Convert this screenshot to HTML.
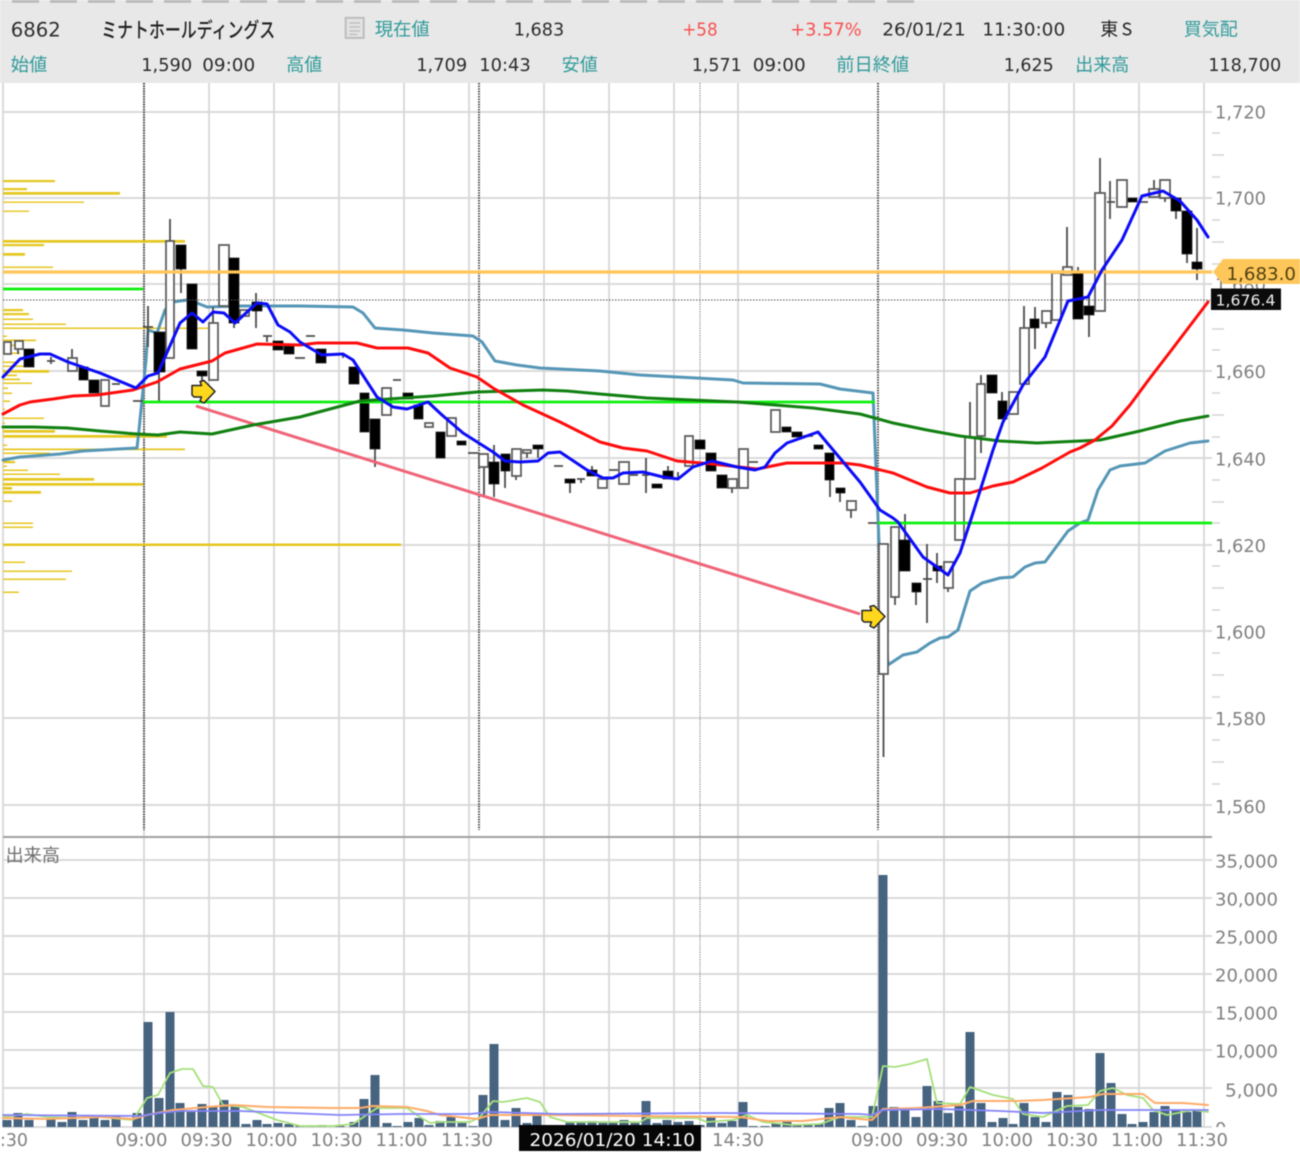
<!DOCTYPE html>
<html lang="ja">
<head>
<meta charset="utf-8">
<title>6862 ミナトホールディングス</title>
<style>
html,body{margin:0;padding:0;background:#fff;width:1300px;height:1158px;overflow:hidden}
svg{display:block;filter:blur(0.5px)}
text{font-family:"DejaVu Sans","Noto Sans CJK JP",sans-serif;font-size:18px;fill:#2c2c2c}
.j{font-family:"Noto Sans CJK JP","DejaVu Sans",sans-serif;fill:#2f9a9a}
.r{fill:#f85050}
.a{fill:#808080}
.l{fill:none;stroke-linejoin:round;stroke-linecap:round}
</style>
</head>
<body>
<svg width="1300" height="1158" viewBox="0 0 1300 1158" xmlns="http://www.w3.org/2000/svg">
<defs><clipPath id="z"><rect x="1210" y="1100" width="30" height="27"/></clipPath></defs>
<rect width="1300" height="1158" fill="#fff"/>
<!-- header -->
<rect width="1300" height="83" fill="#e8e8e8"/>
<path d="M12 1H39M50 1H77M88 1H115M126 1H153M164 1H191M202 1H229M240 1H267M278 1H305M316 1H343M354 1H381M392 1H419M430 1H457M468 1H495M506 1H533M544 1H571M582 1H609M620 1H647M658 1H685M696 1H723M734 1H761M772 1H799M810 1H837M848 1H875M887 1H914" stroke="#b8b8b8" stroke-width="3.4"/>
<g transform="translate(-0.8,-0.6)">
<text x="11.5" y="37" style="font-size:19.5px" textLength="50" lengthAdjust="spacingAndGlyphs">6862</text>
<text class="j" x="102" y="38" style="font-size:21px;fill:#222;font-weight:500" textLength="174" lengthAdjust="spacingAndGlyphs">ミナトホールディングス</text>
<g fill="none" stroke="#bdbdbd">
<rect x="346.500" y="18.500" width="18" height="20" stroke-width="2" fill="#e4e4e4"/>
<path d="M350 23.500H361M350 27.500H361M350 31.500H361M350 35H358" stroke-width="1.400"/>
</g>
<text class="j" x="375.500" y="36" textLength="55" lengthAdjust="spacingAndGlyphs">現在値</text>
<text x="514.500" y="36" textLength="50.500" lengthAdjust="spacingAndGlyphs">1,683</text>
<text class="r" x="683" y="36" textLength="35.500" lengthAdjust="spacingAndGlyphs">+58</text>
<text class="r" x="791" y="36" textLength="71.500" lengthAdjust="spacingAndGlyphs">+3.57%</text>
<text x="883" y="36" textLength="83.500" lengthAdjust="spacingAndGlyphs">26/01/21</text>
<text x="983" y="36" textLength="83" lengthAdjust="spacingAndGlyphs">11:30:00</text>
<text class="j" x="1101" y="36" style="fill:#222" textLength="32" lengthAdjust="spacing">東S</text>
<text class="j" x="1184.500" y="36" textLength="54" lengthAdjust="spacingAndGlyphs">買気配</text>
</g>
<g transform="translate(-0.8,0)">
<text class="j" x="11.500" y="71" textLength="36.500" lengthAdjust="spacingAndGlyphs">始値</text>
<text x="142" y="71" textLength="51" lengthAdjust="spacingAndGlyphs">1,590</text>
<text x="203" y="71" textLength="53" lengthAdjust="spacingAndGlyphs">09:00</text>
<text class="j" x="287" y="71" textLength="36" lengthAdjust="spacingAndGlyphs">高値</text>
<text x="417" y="71" textLength="51" lengthAdjust="spacingAndGlyphs">1,709</text>
<text x="480" y="71" textLength="51.500" lengthAdjust="spacingAndGlyphs">10:43</text>
<text class="j" x="562.500" y="71" textLength="36" lengthAdjust="spacingAndGlyphs">安値</text>
<text x="692.500" y="71" textLength="50" lengthAdjust="spacingAndGlyphs">1,571</text>
<text x="753.500" y="71" textLength="53" lengthAdjust="spacingAndGlyphs">09:00</text>
<text class="j" x="837" y="71" textLength="73" lengthAdjust="spacingAndGlyphs">前日終値</text>
<text x="1004.500" y="71" textLength="50" lengthAdjust="spacingAndGlyphs">1,625</text>
<text class="j" x="1076" y="71" textLength="54" lengthAdjust="spacingAndGlyphs">出来高</text>
<text x="1209" y="71" textLength="73" lengthAdjust="spacingAndGlyphs">118,700</text>
</g>

<!-- grid -->
<path d="M3 83V1127M144 83V1127M209 83V1127M274 83V1127M339 83V1127M404 83V1127M469 83V1127M544 83V1127M609 83V1127M674 83V1127M738 83V1127M878 840V1127M944 83V1127M1009 83V1127M1074 83V1127M1139 83V1127M1204 83V1127" stroke="#d6d6d6" stroke-width="1.700" fill="none"/>
<path d="M3 112H1212M3 198H1212M3 284H1212M3 371H1212M3 458H1212M3 545H1212M3 631H1212M3 718H1212M3 805H1212M3 860H1212M3 898H1212M3 936H1212M3 974H1212M3 1012H1212M3 1050H1212M3 1088H1212M3 1127H1212" stroke="#d6d6d6" stroke-width="1.700" fill="none"/>
<path d="M1212 155H1224M1212 177H1220M1212 133H1220M1212 220H1220M1212 242H1224M1212 264H1220M1212 329H1224M1212 350H1220M1212 393H1220M1212 415H1224M1212 437H1220M1212 480H1220M1212 502H1224M1212 523H1220M1212 566H1220M1212 588H1224M1212 610H1220M1212 653H1220M1212 675H1224M1212 697H1220M1212 740H1220M1212 762H1224M1212 784H1220" stroke="#d4d4d4" stroke-width="1.500"/>
<path d="M3 837H1212" stroke="#a0a0a0" stroke-width="2"/>
<path d="M144 83V830M479 83V830M878 83V830" stroke="#444" stroke-width="2" stroke-dasharray="1.400 1.200" fill="none"/>
<path d="M700 83V1127" stroke="#777" stroke-width="1" stroke-dasharray="1.200 1.200" fill="none"/>

<!-- axis labels -->
<g>
<text class="a" x="1215" y="118.500" textLength="51" lengthAdjust="spacingAndGlyphs">1,720</text>
<text class="a" x="1215" y="204.500" textLength="51" lengthAdjust="spacingAndGlyphs">1,700</text>
<text class="a" x="1215" y="291" textLength="51" lengthAdjust="spacingAndGlyphs">1,680</text>
<text class="a" x="1215" y="378" textLength="51" lengthAdjust="spacingAndGlyphs">1,660</text>
<text class="a" x="1215" y="465.500" textLength="51" lengthAdjust="spacingAndGlyphs">1,640</text>
<text class="a" x="1215" y="552" textLength="51" lengthAdjust="spacingAndGlyphs">1,620</text>
<text class="a" x="1215" y="638.500" textLength="51" lengthAdjust="spacingAndGlyphs">1,600</text>
<text class="a" x="1215" y="725" textLength="51" lengthAdjust="spacingAndGlyphs">1,580</text>
<text class="a" x="1215" y="813" textLength="51" lengthAdjust="spacingAndGlyphs">1,560</text>
<text class="a" x="1215" y="867.500" textLength="63" lengthAdjust="spacingAndGlyphs">35,000</text>
<text class="a" x="1215" y="905.500" textLength="63" lengthAdjust="spacingAndGlyphs">30,000</text>
<text class="a" x="1215" y="943.500" textLength="63" lengthAdjust="spacingAndGlyphs">25,000</text>
<text class="a" x="1215" y="981.500" textLength="63" lengthAdjust="spacingAndGlyphs">20,000</text>
<text class="a" x="1215" y="1019.500" textLength="63" lengthAdjust="spacingAndGlyphs">15,000</text>
<text class="a" x="1215" y="1057.500" textLength="63" lengthAdjust="spacingAndGlyphs">10,000</text>
<text class="a" x="1225" y="1096.500" textLength="53" lengthAdjust="spacingAndGlyphs">5,000</text>
<text class="a" x="1215" y="1135" clip-path="url(#z)">0</text>
<text class="a" x="0" y="1146" textLength="28" lengthAdjust="spacingAndGlyphs">:30</text>
<text class="a" x="115.500" y="1146" textLength="52" lengthAdjust="spacingAndGlyphs">09:00</text>
<text class="a" x="180.500" y="1146" textLength="52" lengthAdjust="spacingAndGlyphs">09:30</text>
<text class="a" x="245.500" y="1146" textLength="52" lengthAdjust="spacingAndGlyphs">10:00</text>
<text class="a" x="310.500" y="1146" textLength="52" lengthAdjust="spacingAndGlyphs">10:30</text>
<text class="a" x="375.500" y="1146" textLength="52" lengthAdjust="spacingAndGlyphs">11:00</text>
<text class="a" x="441" y="1146" textLength="52" lengthAdjust="spacingAndGlyphs">11:30</text>
<text class="a" x="712" y="1146" textLength="52" lengthAdjust="spacingAndGlyphs">14:30</text>
<text class="a" x="851" y="1146" textLength="52" lengthAdjust="spacingAndGlyphs">09:00</text>
<text class="a" x="916" y="1146" textLength="52" lengthAdjust="spacingAndGlyphs">09:30</text>
<text class="a" x="981" y="1146" textLength="52" lengthAdjust="spacingAndGlyphs">10:00</text>
<text class="a" x="1046" y="1146" textLength="52" lengthAdjust="spacingAndGlyphs">10:30</text>
<text class="a" x="1111" y="1146" textLength="52" lengthAdjust="spacingAndGlyphs">11:00</text>
<text class="a" x="1176" y="1146" textLength="52" lengthAdjust="spacingAndGlyphs">11:30</text>
</g>
<text class="j" x="5.500" y="861.500" style="fill:#6e6e6e" textLength="54.500" lengthAdjust="spacingAndGlyphs">出来高</text>

<!-- volume profile -->
<g fill="#e6c61e">
<rect x="3" y="180" width="52" height="2.200"/><rect x="3" y="188" width="24" height="2.200"/><rect x="3" y="192" width="117" height="2.700"/><rect x="3" y="201.500" width="81" height="1.400"/><rect x="3" y="210.500" width="26" height="1.400"/>
<rect x="3" y="240" width="182" height="2.700"/><rect x="3" y="244" width="41" height="2.200"/><rect x="3" y="253" width="22" height="2.700"/><rect x="3" y="266.500" width="50" height="1.500"/><rect x="3" y="309" width="20" height="2.200"/><rect x="3" y="313" width="26" height="2.200"/><rect x="3" y="318.500" width="30" height="1.500"/><rect x="3" y="323.500" width="63" height="1.500"/><rect x="3" y="327.500" width="205" height="1.500"/><rect x="3" y="335.500" width="4" height="1.500"/><rect x="3" y="339.500" width="33" height="1.700"/><rect x="3" y="344.500" width="17" height="1.500"/><rect x="3" y="352.500" width="17" height="1.500"/><rect x="3" y="361.500" width="16" height="1.500"/><rect x="3" y="365.500" width="21" height="1.500"/><rect x="3" y="370" width="46" height="2.700"/><rect x="3" y="374.500" width="14" height="1.700"/><rect x="3" y="378.500" width="17" height="1.700"/><rect x="3" y="382.500" width="29" height="1.500"/><rect x="3" y="387.500" width="5" height="1.500"/><rect x="3" y="392.500" width="9" height="1.500"/><rect x="3" y="400.500" width="7" height="1.500"/><rect x="3" y="408.500" width="2" height="1.500"/><rect x="3" y="417.500" width="41" height="1.500"/><rect x="3" y="422.500" width="2" height="1.500"/><rect x="3" y="430" width="52" height="2.700"/><rect x="3" y="435" width="164" height="2.700"/>
<rect x="3" y="444.500" width="4" height="1.500"/><rect x="3" y="448.500" width="182" height="1.700"/><rect x="3" y="452.500" width="47" height="1.500"/><rect x="3" y="461" width="12" height="2.200"/><rect x="3" y="465.500" width="4" height="1.500"/><rect x="3" y="469.500" width="25" height="1.500"/><rect x="3" y="473.500" width="57" height="1.500"/><rect x="3" y="478" width="91" height="2.700"/><rect x="3" y="483" width="140" height="2.700"/><rect x="3" y="487" width="9" height="2.700"/><rect x="3" y="491" width="38" height="2.700"/><rect x="3" y="500.500" width="9" height="1.500"/><rect x="3" y="522.500" width="30" height="1.500"/><rect x="3" y="526.500" width="30" height="1.500"/><rect x="3" y="543.500" width="398" height="2.500"/><rect x="3" y="561.500" width="22" height="1.500"/><rect x="3" y="570.500" width="69" height="1.500"/><rect x="3" y="578.500" width="63" height="1.500"/><rect x="3" y="591.500" width="16" height="1.500"/>
</g>

<!-- blue-grey band -->
<polyline class="l" stroke="#5596b6" stroke-width="3" points="3,460 20,457 60,454 83,451 137,448 139,430 146,360 148,330 157,333 165,310 173,302 187,300 197,303 207,307 240,306 300,306 353,307 363,313 375,328 403,330 433,333 473,336 482,342 495,361 517,365 540,368 600,371 640,375 733,380 743,383 820,384 840,389 873,393 879,543 888,665 903,655 917,652 930,643 940,638 948,637 958,630 970,591 982,583 1000,578 1013,577 1025,567 1035,563 1045,562 1068,531 1080,523 1088,520 1098,490 1110,470 1120,466 1145,463 1165,451 1190,443 1208,441"/>

<!-- candles -->
<path stroke="#4c4c4c" stroke-width="1.800" fill="none" d="M18 349V354M51 357V364M72 349V358M148 306V347M159 372V401M170 219V241M181 269V293M202 376V382M213 307V323M234 323V328M256 293V328M267 336V342M343 355V358M375 449V467M484 467V495M494 445V497M505 471V488M516 476V480M527 453V458M538 449V458M570 483V493M581 479V483M592 466V470M646 458V493M668 466V471M678 472V479M732 488V493M830 480V497M840 493V502M851 510V518M883.500 674V757M895 597V605M905 514V540M916 592V605M927 544V623M937 553V583M948 588V592M970 402V437M981 375V384M981 436V453M1002 392V401M1024 306V328M1035 307V349M1046 323V328M1067 227V267M1078 267V273M1089 297V337M1100 158V193M1110 181V219M1154 180V189M1165 198V202M1176 211V219M1187 254V263M1197 228V280M47 361H55M112 384H120M133 401H143M143 327H153M263 336H272M295 358H305M306 336H315M393 380H401M468 453H478M554 466H563M577 479H585M609 470H618M630 475H638M642 475H649M749 462H758M803 436H813M868 523H877M923 579H932M1107 202H1115M1138 202H1148"/>
<path fill="#fff" stroke="#585858" stroke-width="1.700" d="M4 342H11V354H4ZM15 341H23V349H15ZM68 358H77V371H68ZM101 380H109V406H101ZM166 241H174V358H166ZM209 323H218V380H209ZM219 245H229V306H219ZM240 310H249V316H240ZM382 388H391V415H382ZM425 423H433V427H425ZM447 418H456V436H447ZM479 454H488V467H479ZM512 449H521V476H512ZM523 450H531V453H523ZM598 479H607V488H598ZM619 462H629V484H619ZM685 436H693V466H685ZM728 479H737V488H728ZM739 449H748V488H739ZM771 410H780V432H771ZM847 501H856V510H847ZM879 544H888V674H879ZM891 527H899V597H891ZM944 562H953V588H944ZM955 479H964V540H955ZM965 437H975V479H965ZM977 384H985V436H977ZM1009 392H1018V414H1009ZM1020 328H1029V384H1020ZM1042 311H1051V323H1042ZM1052 273H1061V320H1052ZM1063 267H1072V275H1063ZM1095 193H1105V311H1095ZM1117 180H1127V207H1117ZM1149 189H1159V197H1149ZM1160 180H1170V198H1160Z"/>
<path fill="#000" stroke="#222" stroke-width=".8" d="M24 349H34V367H24ZM79 367H88V380H79ZM89 380H99V393H89ZM154 332H165V372H154ZM176 245H186V269H176ZM187 284H197V349H187ZM197 371H207V376H197ZM229 258H239V323H229ZM252 302H262V311H252ZM273 341H283V350H273ZM284 346H294V354H284ZM316 349H326V363H316ZM349 367H359V384H349ZM360 393H369V432H360ZM370 419H380V449H370ZM403 393H413V399H403ZM414 405H423V419H414ZM436 432H445V458H436ZM457 441H466V445H457ZM489 462H499V484H489ZM501 454H510V471H501ZM533 445H543V449H533ZM565 479H575V483H565ZM587 470H597V476H587ZM652 484H662V488H652ZM663 471H673V479H663ZM695 440H705V449H695ZM706 453H716V471H706ZM717 475H727V488H717ZM782 427H791V432H782ZM792 432H802V437H792ZM814 445H823V449H814ZM825 453H834V480H825ZM836 488H845V493H836ZM899 540H910V571H899ZM912 583H921V592H912ZM933 566H942V571H933ZM987 375H997V393H987ZM998 401H1007V419H998ZM1030 319H1039V328H1030ZM1073 273H1083V319H1073ZM1084 306H1094V315H1084ZM1128 198H1137V202H1128ZM1171 198H1181V211H1171ZM1182 211H1192V254H1182ZM1192 262H1202V269H1192Z"/>

<!-- level lines -->
<path d="M3 289H143M143 402H875M878 523H1212" stroke="#0cf00c" stroke-width="2.800"/>
<path d="M3 272H1212" stroke="#ffc65a" stroke-width="3.200"/>
<path d="M3 300H1210" stroke="#555" stroke-width="1.100" stroke-dasharray="1.500 1.500"/>
<path d="M196 406L860 614" stroke="#ef6478" stroke-width="3"/>

<!-- MAs -->
<polyline class="l" stroke="#108010" stroke-width="3" points="3,427 33,427 67,428 100,431 137,434 158,435 180,432 212,434 253,425 300,417 360,401 433,396 477,392 543,390 567,391 600,394 647,398 737,402 813,408 860,414 893,423 927,430 960,436 1000,441 1037,443 1080,441 1100,440 1140,431 1180,421 1208,416"/>
<polyline class="l" stroke="#ff0c0c" stroke-width="3" points="3,414 20,405 30,402 53,399 73,396 97,395 133,390 157,382 180,369 212,361 225,353 257,344 300,345 317,343 357,343 377,348 408,348 428,353 450,368 477,377 493,388 523,405 560,422 600,442 623,448 647,451 677,461 713,464 757,469 787,463 843,463 860,465 893,473 927,487 950,493 970,493 993,486 1013,482 1042,468 1070,452 1080,448 1095,440 1112,426 1130,405 1150,378 1170,352 1208,302"/>
<polyline class="l" stroke="#0c0cf8" stroke-width="3" points="3,377 20,359 40,354 50,354 68,362 100,373 136,388 148,376 158,373 180,323 192,313 203,322 213,312 224,313 235,323 257,303 267,304 278,325 290,332 300,342 310,348 322,355 343,354 353,360 377,397 393,407 407,409 428,402 442,415 463,433 493,452 505,461 520,462 538,461 548,453 560,452 587,470 603,478 613,478 623,473 643,472 663,477 678,479 693,467 712,461 737,467 755,470 765,467 775,453 787,443 818,432 860,482 880,510 893,518 898,522 923,557 948,575 960,553 973,513 993,450 1003,422 1023,385 1045,357 1068,301 1088,297 1102,270 1122,240 1142,196 1163,191 1180,201 1197,220 1208,237"/>

<!-- arrows -->
<path d="M192 385.500H201.500L200 381.500L204 380.500L215 391.500L204 403L200 401L201.500 397H194L192 395Z" fill="#ffd81e" stroke="#222" stroke-width="1.500" stroke-linejoin="round"/>
<path d="M862 610.500H871.500L870 606.500L874 605.500L885 616.500L874 628L870 626L871.500 622H864L862 620Z" fill="#ffd81e" stroke="#222" stroke-width="1.500" stroke-linejoin="round"/>

<!-- tags -->
<polygon points="1213,272 1223,259 1300,259 1300,284 1223,284" fill="#ffc65a"/>
<text x="1226.500" y="280" style="fill:#4f4210" textLength="69.500" lengthAdjust="spacingAndGlyphs">1,683.0</text>
<rect x="1211" y="288.500" width="70" height="21.500" fill="#0b0b0b"/>
<text x="1215.500" y="305.500" style="fill:#eee;font-size:15px" textLength="60" lengthAdjust="spacingAndGlyphs">1,676.4</text>

<!-- volume bars -->
<path stroke="#466380" stroke-width="9" fill="none" d="M7 1120V1127M18 1113V1127M29 1120V1127M51 1119V1127M62 1122V1127M72 1112V1127M83 1120V1127M94 1115V1127M105 1120V1127M116 1116V1127M137 1113V1127M148 1022V1127M159 1098V1127M170 1012V1127M180 1103V1127M191 1112V1127M202 1104V1127M213 1107V1127M224 1100V1127M235 1106V1127M246 1124V1127M257 1120V1127M267 1124V1127M278 1123V1127M289 1124V1127M300 1126V1127M311 1126V1127M322 1125V1127M340 1126V1127M354 1122V1127M364 1099V1127M375 1075V1127M387 1123V1127M397 1126V1127M408 1122V1127M419 1118V1127M429 1125V1127M440 1121V1127M451 1117V1127M462 1123V1127M473 1126V1127M483 1095V1127M494 1044V1127M505 1120V1127M516 1108V1127M527 1123V1127M537 1116V1127M570 1122V1127M581 1122V1127M592 1121V1127M603 1123V1127M613 1123V1127M624 1120V1127M635 1123V1127M646 1101V1127M657 1123V1127M667 1120V1127M678 1122V1127M689 1121V1127M700 1125V1127M711 1117V1127M722 1123V1127M732 1121V1127M743 1102V1127M753 1126V1127M765 1126V1127M776 1123V1127M787 1121V1127M797 1124V1127M808 1124V1127M819 1124V1127M829 1108V1127M840 1103V1127M851 1120V1127M862 1126V1127M873 1106V1127M883 875V1127M894 1107V1127M905 1110V1127M916 1117V1127M927 1086V1127M938 1101V1127M948 1113V1127M959 1106V1127M970 1032V1127M981 1103V1127M992 1122V1127M1003 1118V1127M1013 1124V1127M1024 1103V1127M1035 1117V1127M1046 1122V1127M1057 1092V1127M1068 1095V1127M1078 1107V1127M1089 1109V1127M1100 1053V1127M1111 1083V1127M1122 1114V1127M1132 1124V1127M1143 1122V1127M1154 1112V1127M1165 1106V1127M1176 1110V1127M1187 1112V1127M1197 1110V1127"/>

<!-- volume MAs -->
<polyline class="l" stroke="#a6e07c" stroke-width="1.800" points="3,1117 27,1114 47,1117 73,1118 100,1117 133,1120 147,1098 158,1095 170,1073 182,1069 193,1069 203,1086 213,1087 223,1105 243,1107 277,1120 300,1126 333,1126 353,1124 377,1108 407,1108 420,1117 430,1123 440,1122 470,1122 480,1117 493,1101 503,1102 527,1098 540,1102 550,1117 567,1122 640,1122 647,1118 697,1118 707,1122 733,1120 747,1115 763,1122 793,1125 820,1124 840,1117 860,1117 872,1117 883,1066 895,1067 910,1064 927,1059 937,1103 960,1104 970,1087 993,1095 1013,1099 1023,1114 1043,1117 1067,1106 1088,1105 1100,1091 1113,1088 1127,1095 1143,1098 1153,1110 1167,1115 1193,1110 1208,1112"/>
<polyline class="l" stroke="#ffac68" stroke-width="2" points="3,1118 47,1119 100,1117 133,1119 147,1115 173,1110 207,1107 233,1105 267,1107 333,1108 360,1108 373,1106 407,1107 427,1111 440,1115 477,1119 490,1115 547,1115 640,1116 740,1117 767,1121 803,1121 840,1117 860,1119 872,1120 883,1109 917,1108 960,1105 973,1101 1017,1101 1043,1100 1090,1097 1103,1094 1143,1094 1155,1103 1183,1103 1208,1105"/>
<polyline class="l" stroke="#8484fa" stroke-width="1.800" points="3,1115 140,1116 160,1113 180,1111 240,1111 340,1115 400,1114 470,1114 490,1112 560,1114 720,1113 860,1114 872,1115 883,1110 940,1109 1000,1111 1043,1113 1100,1110 1208,1110"/>

<!-- time tag -->
<rect x="519" y="1125" width="182" height="26" fill="#060606"/>
<text x="529.500" y="1146" style="fill:#fff" textLength="165.500" lengthAdjust="spacingAndGlyphs">2026/01/20 14:10</text>
</svg>
</body>
</html>
